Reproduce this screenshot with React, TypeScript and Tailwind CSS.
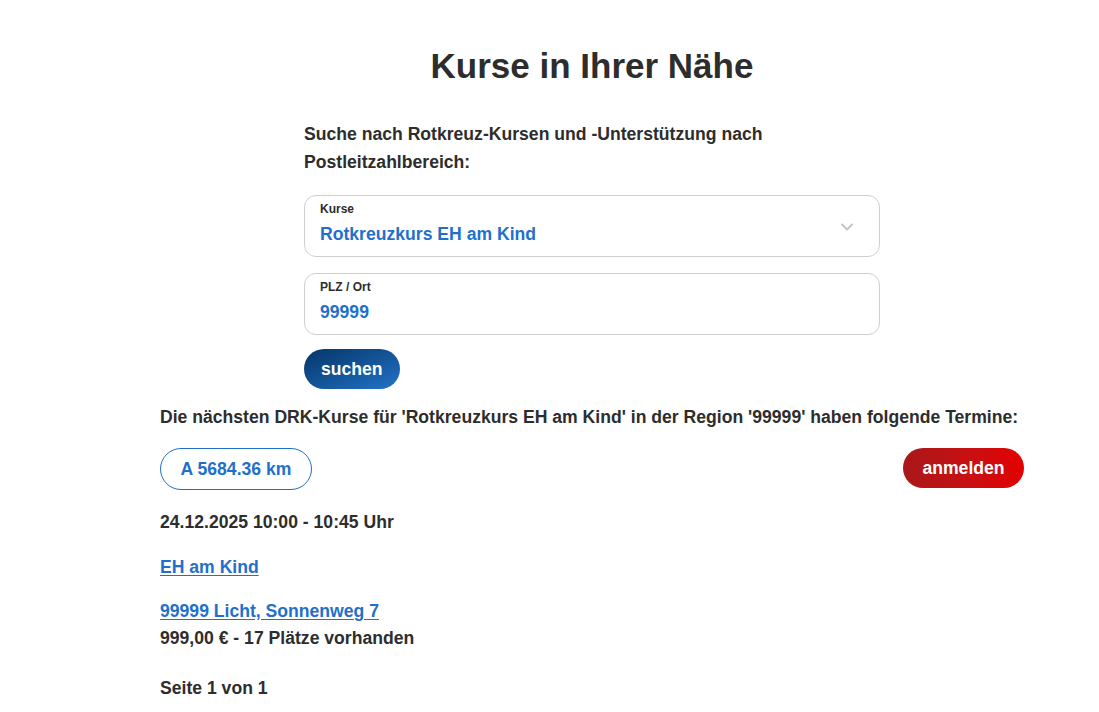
import { ChevronDown } from "lucide-react";

const font = { fontFamily: '"Liberation Sans", Arial, sans-serif' };

const Field = ({ label, value, select }: { label: string; value: string; select?: boolean }) => (
	<div className="relative flex h-[62px] w-full flex-col rounded-[12px] border border-[#cfcfcf] bg-white pt-[5px] pl-[15px] pr-10">
		<span className="text-[12px] leading-[16px] font-bold text-[#2d2d2d]">{label}</span>
		<span className="mt-[5px] text-[17.6px] leading-[24px] font-bold text-[#1f70cc]">{value}</span>
		{select && (
			<ChevronDown
				className="absolute top-[21px] right-[22px] h-[20px] w-[20px] text-[#c4c4c4]"
				strokeWidth={2.4}
			/>
		)}
	</div>
);

export default function App() {
	return (
		<div className="min-h-[712px] bg-white pl-[85px] text-[#2d2d2d]" style={font}>
			<h1 className="pt-[45px] text-center text-[35px] leading-[42px] font-bold text-[#2d2d2d]">
				Kurse in Ihrer Nähe
			</h1>

			<div className="mx-auto mt-[33px] w-[576px]">
				<p className="text-[17.6px] leading-[28px] font-bold">
					Suche nach Rotkreuz-Kursen und -Unterstützung nach Postleitzahlbereich:
				</p>
				<div className="mt-[19px] flex flex-col gap-[16px]">
					<Field label="Kurse" value="Rotkreuzkurs EH am Kind" select />
					<Field label="PLZ / Ort" value="99999" />
				</div>
				<button className="mt-[14px] flex h-[40px] items-center rounded-full bg-gradient-to-br from-[#063668] to-[#2273c9] px-[17px] text-[17.6px] font-bold text-white">
					suchen
				</button>
			</div>

			<div className="mx-auto w-[864px]">
				<p className="mt-[14px] text-[17.6px] leading-[28px] font-bold whitespace-nowrap">
					Die nächsten DRK-Kurse für 'Rotkreuzkurs EH am Kind' in der Region '99999' haben folgende Termine:
				</p>

				<div className="mt-[17px] flex items-start justify-between">
					<div className="flex h-[42px] w-[152px] items-center justify-center rounded-full border border-[#2170c8] text-[17.6px] font-bold text-[#1f70cc]">
						A 5684.36 km
					</div>
					<button className="flex h-[40px] w-[121px] items-center justify-center rounded-full bg-gradient-to-r from-[#a9171a] to-[#e30000] text-[17.6px] font-bold text-white">
						anmelden
					</button>
				</div>

				<p className="mt-[18px] text-[17.6px] leading-[28px] font-bold">24.12.2025 10:00 - 10:45 Uhr</p>

				<p className="mt-[17px] text-[17.6px] leading-[28px] font-bold">
					<a href="#" className="text-[#1f70cc] underline underline-offset-2">
						EH am Kind
					</a>
				</p>

				<div className="mt-[17px] text-[17.6px] leading-[27px] font-bold">
					<a href="#" className="text-[#1f70cc] underline underline-offset-2">
						99999 Licht, Sonnenweg 7
					</a>
					<p>999,00 € - 17 Plätze vorhanden</p>
				</div>

				<p className="mt-[22px] text-[17.6px] leading-[28px] font-bold">Seite 1 von 1</p>
			</div>
		</div>
	);
}
